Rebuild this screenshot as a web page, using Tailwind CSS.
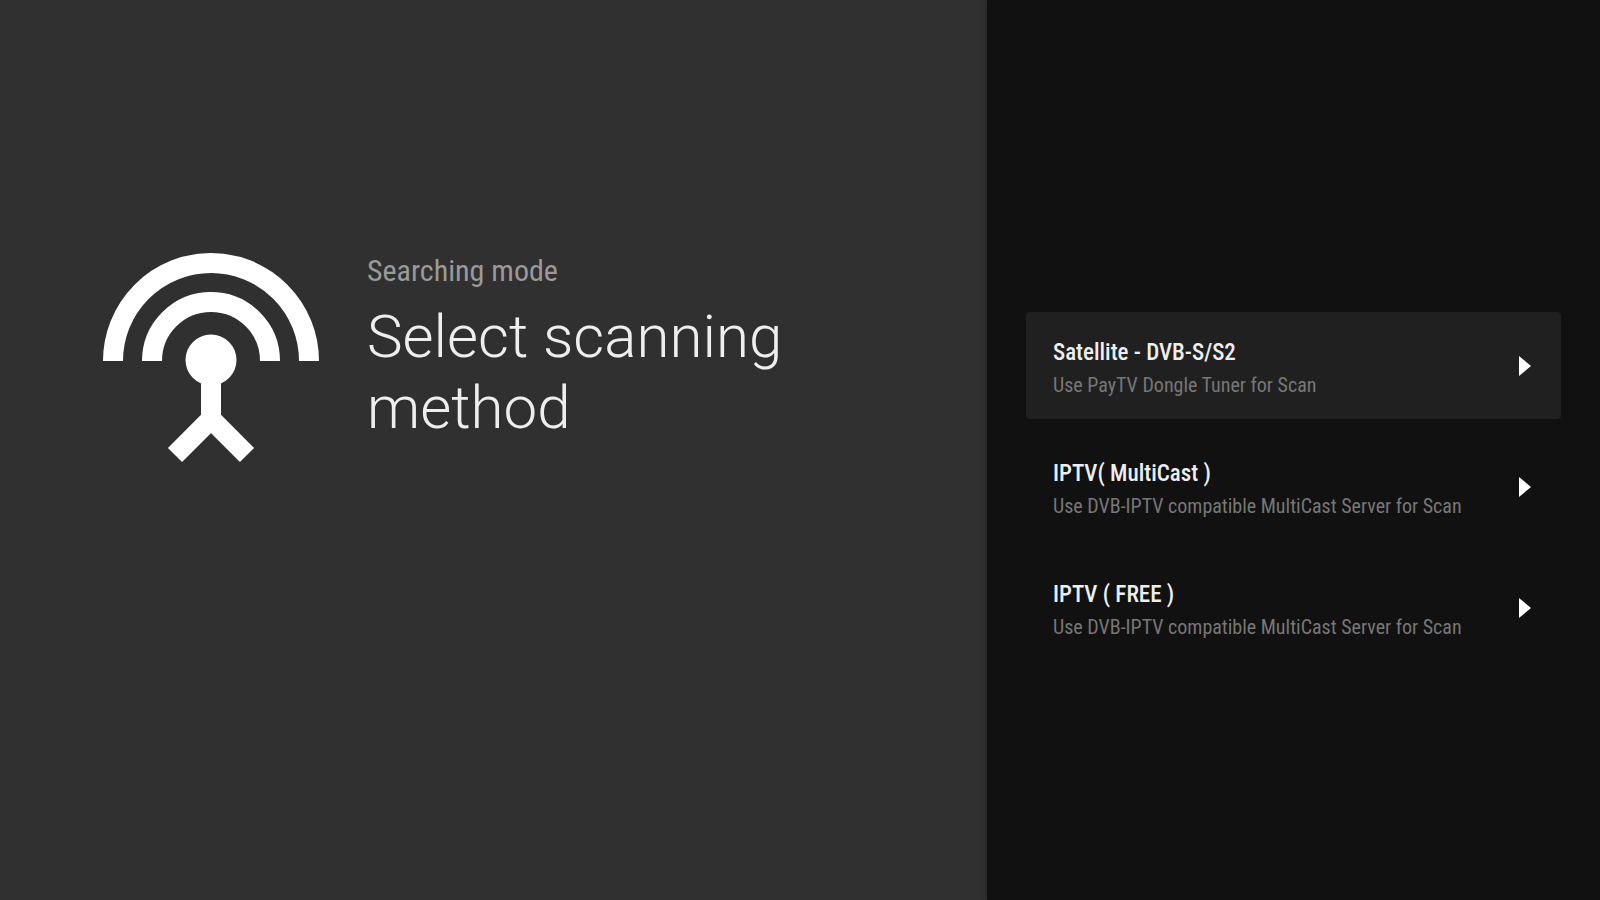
<!DOCTYPE html>
<html lang="en"><head><meta charset="utf-8"><title>Searching mode</title>
<script src="https://cdn.jsdelivr.net/npm/@tailwindcss/browser@4"></script></head>
<body class="bg-[#303030] font-['Roboto_Condensed',Roboto,sans-serif]">
<div class="flex min-h-screen">
<main class="flex flex-1 items-start gap-[47px] bg-[#303030] pt-[250px] pl-[102px]">
<svg class="h-[216px] w-[218px] shrink-0" viewBox="0 0 218 216" fill="none" stroke="#fff" stroke-width="20" aria-hidden="true">
<path d="M11 111A98 98 0 0 1 207 111M50 111A59 59 0 0 1 168 111"/>
<circle cx="109" cy="110" r="25.5" fill="#fff" stroke="none"/>
<path d="M109 120V169M73 205L109 169L145 205"/>
</svg>
<div class="w-[440px]">
<p class="text-[30px] leading-[42px] text-[#9a9a9a]">Searching mode</p>
<h1 class="mt-[9px] font-[Roboto,sans-serif] text-[60px] leading-[71px] font-light text-[#eeeeee]">Select scanning method</h1>
</div>
</main>
<aside class="flex w-[613px] shrink-0 flex-col gap-[14px] bg-[#111111] px-[39px] pt-[312px] shadow-[0_0_6px_rgba(0,0,0,0.3)]">
<button class="flex h-[107px] items-center justify-between rounded bg-[#202020] pr-[30px] pl-[27px] text-left">
<span class="pt-[7px]"><span class="block text-[23px] leading-8 font-medium text-[#eeeeee]">Satellite - DVB-S/S2</span><span class="block text-[20px] leading-8 text-[#777777]">Use PayTV Dongle Tuner for Scan</span></span>
<svg class="h-5 w-3 shrink-0" viewBox="0 0 12 20" fill="#fff" aria-hidden="true"><path d="M0 0L12 10L0 20Z"/></svg></button>
<button class="flex h-[107px] items-center justify-between rounded pr-[30px] pl-[27px] text-left">
<span class="pt-[7px]"><span class="block text-[23px] leading-8 font-medium text-[#eeeeee]">IPTV( MultiCast )</span><span class="block text-[20px] leading-8 text-[#777777]">Use DVB-IPTV compatible MultiCast Server for Scan</span></span>
<svg class="h-5 w-3 shrink-0" viewBox="0 0 12 20" fill="#fff" aria-hidden="true"><path d="M0 0L12 10L0 20Z"/></svg></button>
<button class="flex h-[107px] items-center justify-between rounded pr-[30px] pl-[27px] text-left">
<span class="pt-[7px]"><span class="block text-[23px] leading-8 font-medium text-[#eeeeee]">IPTV ( FREE )</span><span class="block text-[20px] leading-8 text-[#777777]">Use DVB-IPTV compatible MultiCast Server for Scan</span></span>
<svg class="h-5 w-3 shrink-0" viewBox="0 0 12 20" fill="#fff" aria-hidden="true"><path d="M0 0L12 10L0 20Z"/></svg></button>
</aside></div></body></html>
